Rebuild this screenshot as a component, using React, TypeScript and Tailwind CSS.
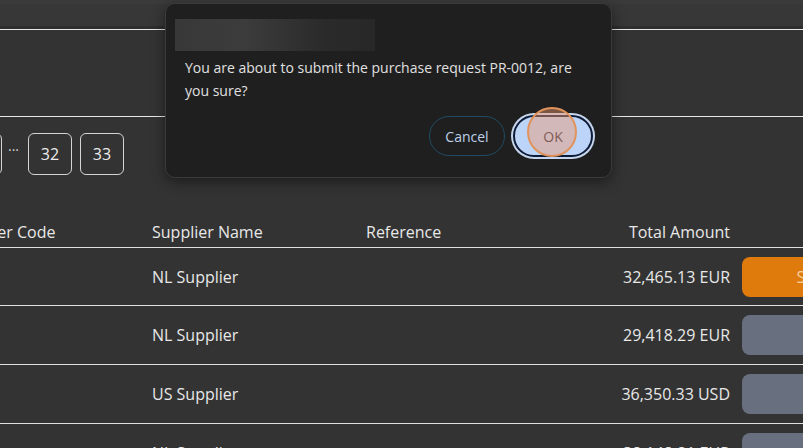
import { useState } from "react";

type Row = {
  code: string;
  supplier: string;
  reference: string;
  amount: string;
  active: boolean;
};

const rows: Row[] = [
  { code: "NL002", supplier: "NL Supplier", reference: "", amount: "32,465.13 EUR", active: true },
  { code: "NL002", supplier: "NL Supplier", reference: "", amount: "29,418.29 EUR", active: false },
  { code: "US002", supplier: "US Supplier", reference: "", amount: "36,350.33 USD", active: false },
  { code: "NL002", supplier: "NL Supplier", reference: "", amount: "38,148.81 EUR", active: false },
];

function PageBox({ label }: { label: string }) {
  return (
    <div className="flex h-[42px] w-[44px] shrink-0 items-center justify-center rounded-[6px] border border-[#d4d4d4] text-[16px] text-[#ececec]">
      {label}
    </div>
  );
}

function ConfirmDialog() {
  return (
    <div className="absolute left-[165px] top-[3px] flex h-[175px] w-[447px] flex-col rounded-[10px] border border-[#3a3a3a] bg-[#1f1f1f] pb-[18px] pl-[19px] pr-[16px] pt-[15px] shadow-[0_4px_14px_rgba(0,0,0,0.45)]">
      {/* blurred title */}
      <div className="-ml-[10px] h-[32px] w-[200px] bg-[linear-gradient(90deg,#383838,#3c3c3c_35%,#333333_55%,#2a2a2a_75%,#282828)]" />
      <p className="mt-[5px] text-[14px] leading-[23px] text-[#e0e0e0]">
        You are about to submit the purchase request PR-0012, are you sure?
      </p>
      <div className="mt-auto flex items-center justify-end gap-[6px]">
        <button className="h-[40px] w-[76px] rounded-full border border-[#1f4c62] text-[14px] text-[#bcd0e8]">
          Cancel
        </button>
        <div className="relative m-[2px]">
          <button className="h-[42px] w-[80px] rounded-full border-2 border-[#0e1b36] bg-[#bcd4f7] text-[14px] text-[#1c2a44] ring-2 ring-[#c6d6ee]">
            OK
          </button>
          <span className="pointer-events-none absolute left-[14px] top-[-8px] h-[50px] w-[50px] rounded-full border-2 border-[#e0935a] bg-[rgba(240,150,110,0.45)]" />
        </div>
      </div>
    </div>
  );
}

export default function App() {
  const [open] = useState(true);

  return (
    <div className="relative h-[448px] w-[803px] overflow-hidden bg-[#333333] font-['Open_Sans',_'Noto_Sans',sans-serif] text-[#e8e8e8]">
      <div className="h-[4px] bg-[#3a3a3a]" />
      <div className="h-[22px] bg-[#373737]" />
      <div className="h-[3px] bg-[#2e2e2e]" />
      <div className="h-px bg-[#e8e8e8]" />

      <div className="h-[86px]" />
      <div className="h-px bg-[#e8e8e8]" />

      <div className="-ml-[42px] mt-[16px] flex items-start">
        <PageBox label="1" />
        <span className="w-[26px] pl-[6px] pt-[2px] text-left text-[14px] leading-[22px] text-[#d0d0d0]">...</span>
        <PageBox label="32" />
        <div className="w-2" />
        <PageBox label="33" />
      </div>

      <div className="-ml-[49px] mt-[36px] w-[1000px] text-[16px]">
        <div className="grid h-[37px] grid-cols-[201px_214px_200px_164px_162px] items-center border-b border-[#e0e0e0] pt-[5px]">
          <span>Supplier Code</span>
          <span>Supplier Name</span>
          <span>Reference</span>
          <span className="text-right">Total Amount</span>
          <span />
        </div>
        {rows.map((r, i) => (
          <div
            key={i}
            className={`grid ${i === 0 ? "h-[58px]" : "h-[59px]"} grid-cols-[201px_214px_200px_164px_12px_162px] items-center border-b border-[#e0e0e0]`}
          >
            <span>{r.code}</span>
            <span>{r.supplier}</span>
            <span>{r.reference}</span>
            <span className="text-right">{r.amount}</span>
            <span />
            <button
              className={
                r.active
                  ? "h-[40px] rounded-[8px] bg-[#df7a0c] text-[16px] text-[#f6cf9f]"
                  : "h-[40px] rounded-[8px] bg-[#687080] text-[16px] text-[#687080]"
              }
            >
              Submit
            </button>
          </div>
        ))}
      </div>

      {open && <ConfirmDialog />}
    </div>
  );
}
